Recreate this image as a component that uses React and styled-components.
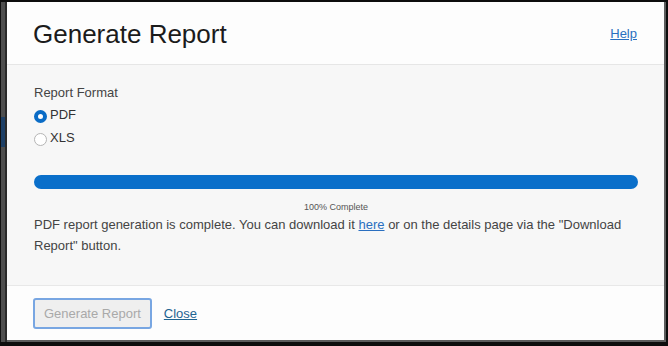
import React from 'react';
import styled, { createGlobalStyle } from 'styled-components';

const GlobalStyle = createGlobalStyle`
  html, body {
    margin: 0;
    padding: 0;
    background: #0d0d0d;
  }
  body {
    font-family: "Liberation Sans", Arial, sans-serif;
  }
`;

const Screen = styled.div`
  width: 668px;
  height: 346px;
  display: flex;
  background: #0d0d0d;
  overflow: hidden;
`;

const Backdrop = styled.div`
  width: 7px;
  margin-top: 2px;
  height: 340px;
  background: linear-gradient(to right, #111 0 1px, #4e4e4e 1px 5px, #2a2a2a 5px 7px);
  display: flex;
  flex-direction: column;
  .chip {
    margin-top: 115px;
    height: 30px;
    background: linear-gradient(to right, #111 0 1px, #1d3f66 1px 5px, #2a2a2a 5px 7px);
  }
`;

const Frame = styled.div`
  margin-top: 2px;
  width: 659px;
  height: 340px;
  display: flex;
  border-right: 2px solid #5c5c5c;
  border-bottom: 2px solid #5c5c5c;
  box-sizing: border-box;
`;

const Dialog = styled.div`
  flex: 1;
  display: flex;
  flex-direction: column;
  background: #fdfdfd;
`;

const Header = styled.header`
  height: 63px;
  box-sizing: border-box;
  display: flex;
  align-items: center;
  justify-content: space-between;
  padding: 0 27px 0 26px;
  border-bottom: 1px solid #e6e6e6;
  h1 {
    margin: 0;
    font-size: 26px;
    font-weight: normal;
    color: #1b1b1b;
    padding-top: 2px;
  }
`;

const Link = styled.a`
  color: ${p => p.$tone || '#2a6fc0'};
  text-decoration: underline;
  cursor: pointer;
  font-size: ${p => p.$size || 'inherit'};
`;

const Body = styled.section`
  flex: 1;
  background: #f7f7f7;
  padding: 20px 26px 0 27px;
  color: #444;
  font-size: 13px;
`;

const FieldLabel = styled.div`
  line-height: 16px;
  margin-bottom: 2px;
`;

const Option = styled.label`
  display: flex;
  align-items: center;
  gap: 3px;
  height: 23px;
  font-size: 13px;
  color: #333;
`;

const Radio = styled.span`
  width: 13px;
  height: 13px;
  border-radius: 50%;
  box-sizing: border-box;
  margin-top: 3px;
  background: #fff;
  border: ${p => (p.$checked ? '4px solid #0a6cc6' : '1px solid #b5b5b5')};
`;

const Progress = styled.div`
  margin-top: 26px;
  height: 14px;
  border-radius: 7px;
  background: #0a6fca;
`;

const ProgressText = styled.div`
  text-align: center;
  font-size: 9px;
  color: #555;
  margin-top: 13px;
`;

const Message = styled.p`
  margin: 2px 0 0;
  font-size: 13px;
  line-height: 21px;
  color: #444;
`;

const Footer = styled.footer`
  height: 55px;
  box-sizing: border-box;
  border-top: 1px solid #e8e8e8;
  display: flex;
  align-items: center;
  gap: 12px;
  padding: 0 0 0 26px;
`;

const Button = styled.button`
  height: 31px;
  padding: 0 9px;
  font-family: "Liberation Sans", Arial, sans-serif;
  font-size: 13px;
  color: #a9a9a9;
  background: #efefef;
  border: 2px solid #78a6e2;
  border-radius: 3px;
`;

export default function App() {
  return (
    <>
      <GlobalStyle />
      <Screen>
        <Backdrop>
          <div className="chip" />
        </Backdrop>
        <Frame>
          <Dialog>
            <Header>
              <h1>Generate Report</h1>
              <Link $size="13px">Help</Link>
            </Header>
            <Body>
              <FieldLabel>Report Format</FieldLabel>
              <Option>
                <Radio $checked />
                PDF
              </Option>
              <Option>
                <Radio />
                XLS
              </Option>
              <Progress />
              <ProgressText>100% Complete</ProgressText>
              <Message>
                PDF report generation is complete. You can download it <Link>here</Link> or on the details page via the "Download Report" button.
              </Message>
            </Body>
            <Footer>
              <Button disabled>Generate Report</Button>
              <Link $tone="#1f6491" $size="13px">Close</Link>
            </Footer>
          </Dialog>
        </Frame>
      </Screen>
    </>
  );
}
